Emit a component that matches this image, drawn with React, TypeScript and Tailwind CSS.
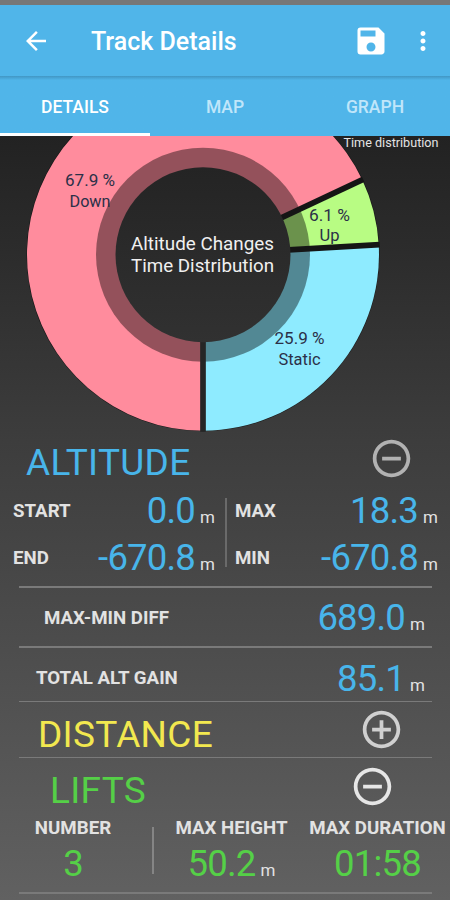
import type { ReactNode } from "react";
import {
  MdAddCircleOutline,
  MdArrowBack,
  MdMoreVert,
  MdRemoveCircleOutline,
  MdSave,
} from "react-icons/md";

const TABS = ["DETAILS", "MAP", "GRAPH"];

const CX = 203;
const CY = 118.7;
const R = 176;

// Angles in degrees, counterclockwise from 3 o'clock
const SLICES = [
  { name: "Static", from: -90, to: 3.24, color: "#8eebff" },
  { name: "Up", from: 3.24, to: 25.2, color: "#b8fc83" },
  { name: "Down", from: 25.2, to: 270, color: "#ff8c9d" },
];

function point(angle: number, r: number) {
  const a = (angle * Math.PI) / 180;
  return [CX + r * Math.cos(a), CY - r * Math.sin(a)];
}

function slicePath(from: number, to: number) {
  const [x1, y1] = point(from, R);
  const [x2, y2] = point(to, R);
  return `M${CX} ${CY} L${x1} ${y1} A${R} ${R} 0 ${to - from > 180 ? 1 : 0} 0 ${x2} ${y2} Z`;
}

function PieChart() {
  return (
    <svg width="450" height="300" viewBox="0 0 450 300" className="block shrink-0">
      <defs>
        <linearGradient id="hole" x1="0" y1="0" x2="0" y2="1">
          <stop offset="0" stopColor="#242424" />
          <stop offset="1" stopColor="#313131" />
        </linearGradient>
      </defs>
      <circle cx={CX} cy={CY} r={R + 0.5} fill="#161616" />
      {SLICES.map((s) => (
        <path key={s.name} d={slicePath(s.from, s.to)} fill={s.color} />
      ))}
      <circle cx={CX} cy={CY} r="107" fill="#000" fillOpacity="0.42" />
      {SLICES.map((s) => {
        const [x, y] = point(s.from, R + 1);
        return (
          <line
            key={s.name}
            x1={CX}
            y1={CY}
            x2={x}
            y2={y}
            stroke={s.name === "Static" ? "#262626" : "#151515"}
            strokeWidth="5.7"
          />
        );
      })}
      <circle cx={CX} cy={CY} r="87.5" fill="url(#hole)" />
      <g fill="#2b3048" fontSize="17" textAnchor="middle">
        <text x="90" y="50" textLength="50" lengthAdjust="spacingAndGlyphs">67.9 %</text>
        <text x="90" y="70.5" textLength="41" lengthAdjust="spacingAndGlyphs">Down</text>
        <text x="329.5" y="84.5" textLength="41" lengthAdjust="spacingAndGlyphs">6.1 %</text>
        <text x="329.5" y="104.5" textLength="20" lengthAdjust="spacingAndGlyphs">Up</text>
        <text x="299.5" y="208" textLength="50" lengthAdjust="spacingAndGlyphs">25.9 %</text>
        <text x="299.5" y="228.500" textLength="42" lengthAdjust="spacingAndGlyphs">Static</text>
      </g>
      <g fill="#f0f0f0" fontSize="19">
        <text x="131" y="114" textLength="143" lengthAdjust="spacingAndGlyphs">Altitude Changes</text>
        <text x="131" y="136" textLength="143" lengthAdjust="spacingAndGlyphs">Time Distribution</text>
      </g>
      <text x="343.500" y="11" textLength="95" lengthAdjust="spacingAndGlyphs" fill="#e4e4e4" fontSize="12.5">
        Time distribution
      </text>
    </svg>
  );
}

function Label({ children }: { children: ReactNode }) {
  return <span className="text-[18.7px] leading-none font-bold whitespace-nowrap text-[#e2e2e2]">{children}</span>;
}

function Value({ value, unit, color = "text-[#48b5ea]" }: { value: string; unit?: string; color?: string }) {
  return (
    <span className="flex items-baseline gap-[5px] leading-none">
      <span className={`text-[36.5px] leading-none tracking-[-0.8px] ${color}`}>{value}</span>
      {unit && <span className="text-[17px] leading-none text-[#e2e2e2]">{unit}</span>}
    </span>
  );
}

function Divider() {
  return <div className="ml-[19px] mr-[18px] h-[1.5px] shrink-0 bg-[#7a7a7a]" />;
}

export default function App() {
  return (
    <div className="flex h-[900px] w-[450px] flex-col overflow-hidden bg-[#222] font-['Roboto',sans-serif]">
      {/* Status bar */}
      <div className="h-[5px] shrink-0 bg-[#777]" />

      {/* App bar */}
      <header className="flex h-[71px] shrink-0 items-center bg-[#50b5e9] pl-[21px] pr-[12px] text-white">
        <MdArrowBack size={30} />
        <h1 className="mt-[2px] ml-[40px] flex-1 text-[25px] leading-none font-medium">Track Details</h1>
        <MdSave size={36} />
        <MdMoreVert size={30} className="ml-[19px]" />
      </header>

      {/* Tabs */}
      <nav className="grid h-[60px] shrink-0 grid-cols-3 bg-linear-to-b from-[#4297c4] via-[#50b5e9] via-[4px] to-[#50b5e9]">
        {TABS.map((tab, i) => (
          <button
            key={tab}
            className={`border-b-[3px] pt-[6px] text-[17.5px] leading-none font-medium ${
              i === 0 ? "border-white text-white" : "border-transparent text-[#c0e6fa]"
            }`}
          >
            {tab}
          </button>
        ))}
      </nav>

      <main className="flex flex-1 flex-col bg-linear-to-b from-[#222] via-[#3d3d3d] via-[40%] to-[#616161]">
        <PieChart />

        {/* Altitude */}
        <div className="flex h-[52px] items-center justify-between pl-[26px] pr-[36.5px]">
          <h2 className="text-[37px] leading-none tracking-[0.3px] text-[#48b5ea]">ALTITUDE</h2>
          <MdRemoveCircleOutline size={45} className="mb-[7px] text-[#b2b2b2]" />
        </div>
        <div className="flex h-[98px] pl-[13px] pr-[12px]">
          <div className="flex w-[202px] flex-col">
            <div className="flex h-[46px] items-center justify-between">
              <Label>START</Label>
              <Value value="0.0" unit="m" />
            </div>
            <div className="flex h-[48px] items-center justify-between">
              <Label>END</Label>
              <Value value="-670.8" unit="m" />
            </div>
          </div>
          <div className="mt-[10px] ml-[10px] h-[69px] w-[2px] bg-[#6a6a6a]" />
          <div className="ml-[8px] flex flex-1 flex-col">
            <div className="flex h-[46px] items-center justify-between">
              <Label>MAX</Label>
              <Value value="18.3" unit="m" />
            </div>
            <div className="flex h-[48px] items-center justify-between">
              <Label>MIN</Label>
              <Value value="-670.8" unit="m" />
            </div>
          </div>
        </div>
        <Divider />
        <div className="flex h-[58.5px] items-center justify-between pt-[3px] pl-[44px] pr-[25px]">
          <Label>MAX-MIN DIFF</Label>
          <Value value="689.0" unit="m" />
        </div>
        <Divider />
        <div className="flex h-[53px] items-end justify-between pb-[3px] pl-[36px] pr-[25px]">
          <span className="mb-[10px] flex">
            <Label>TOTAL ALT GAIN</Label>
          </span>
          <Value value="85.1" unit="m" />
        </div>
        <Divider />

        {/* Distance */}
        <div className="flex h-[54.5px] items-center justify-between pl-[38px] pr-[46px]">
          <h2 className="mt-[10px] text-[37px] leading-none tracking-[0.3px] text-[#f2e84f]">DISTANCE</h2>
          <MdAddCircleOutline size={45} className="text-[#d0d0d0]" />
        </div>
        <Divider />

        {/* Lifts */}
        <div className="flex h-[56.5px] items-center justify-between pl-[50px] pr-[55.5px]">
          <h2 className="mt-[9px] text-[37px] leading-none tracking-[0.3px] text-[#55d047]">LIFTS</h2>
          <MdRemoveCircleOutline size={45} className="text-[#e6e6e6]" />
        </div>
        <div className="flex h-[77.5px] pt-[4px]">
          <div className="ml-[20px] flex w-[106px] flex-col items-center gap-[9px]">
            <Label>NUMBER</Label>
            <Value value="3" color="text-[#55d047]" />
          </div>
          <div className="mt-[8px] ml-[26px] h-[47px] w-[1.5px] bg-[#858585]" />
          <div className="ml-[18px] flex w-[120px] flex-col items-center gap-[9px]">
            <Label>MAX HEIGHT</Label>
            <Value value="50.2" unit="m" color="text-[#55d047]" />
          </div>
          <div className="ml-[17px] flex w-[138px] flex-col items-center gap-[9px]">
            <Label>MAX DURATION</Label>
            <Value value="01:58" color="text-[#55d047]" />
          </div>
        </div>
        <Divider />
      </main>
    </div>
  );
}
